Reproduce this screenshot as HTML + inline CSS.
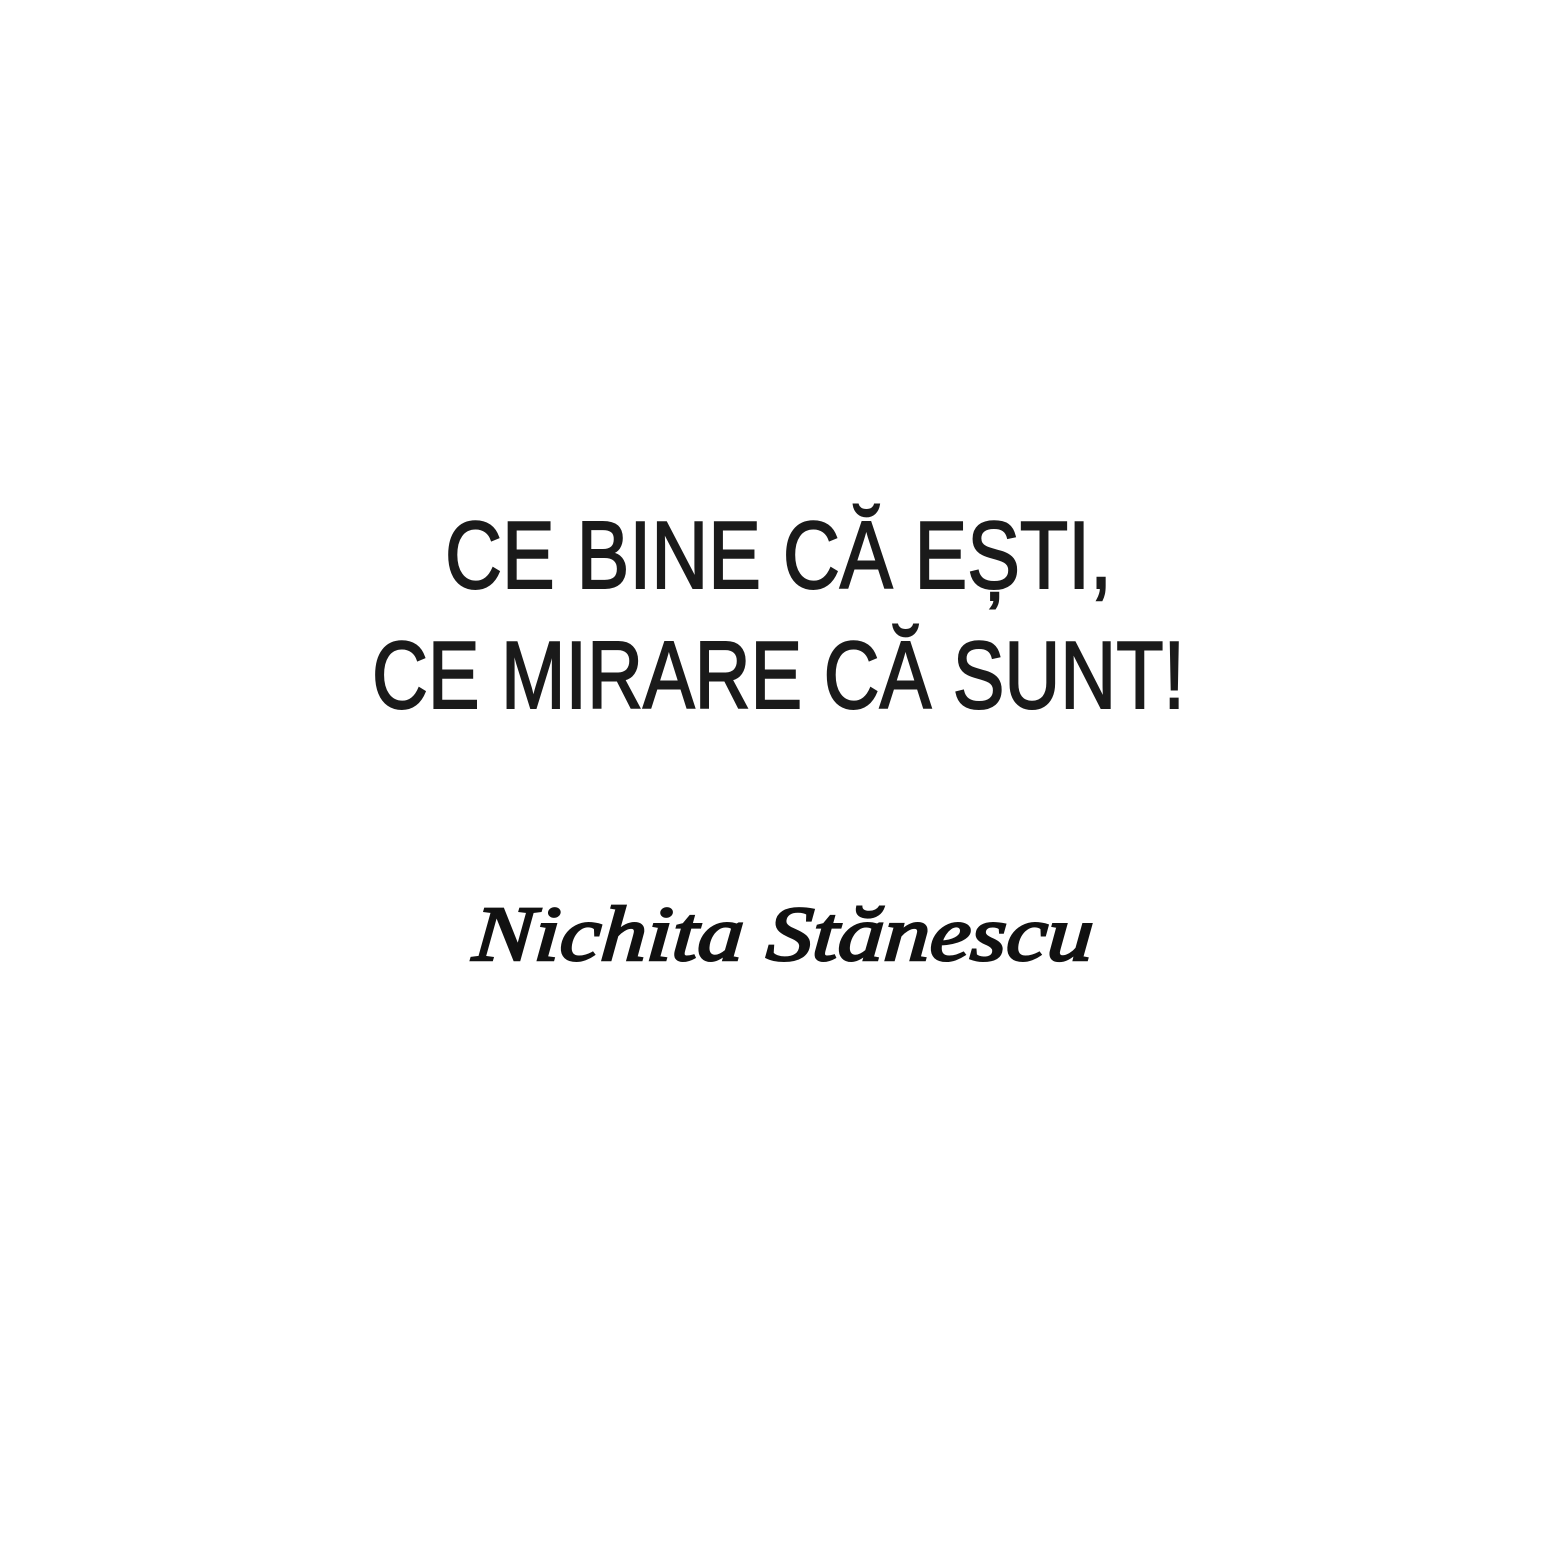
<!DOCTYPE html>
<html><head><meta charset="utf-8"><style>
html,body{margin:0;padding:0;background:#fff;}
svg{display:block}
</style></head><body>
<svg width="1547" height="1566" viewBox="0 0 1547 1566" xmlns="http://www.w3.org/2000/svg">
<rect width="1547" height="1566" fill="#fff"/>
<g font-family="Liberation Sans, sans-serif" fill="#1a1a1a" stroke="#1a1a1a" stroke-width="2" font-size="96">
<text x="445" y="588" textLength="667" lengthAdjust="spacingAndGlyphs">CE BINE CĂ EȘTI,</text>
<text x="372" y="708" textLength="813" lengthAdjust="spacingAndGlyphs">CE MIRARE CĂ SUNT!</text>
</g>
<text x="474" y="960" font-family="Liberation Serif, serif" font-style="italic" font-size="78" fill="#111" stroke="#111" stroke-width="2.5" textLength="620" lengthAdjust="spacingAndGlyphs" transform="skewX(-4) translate(65 0)">Nichita  Stănescu</text>
</svg>
</body></html>
